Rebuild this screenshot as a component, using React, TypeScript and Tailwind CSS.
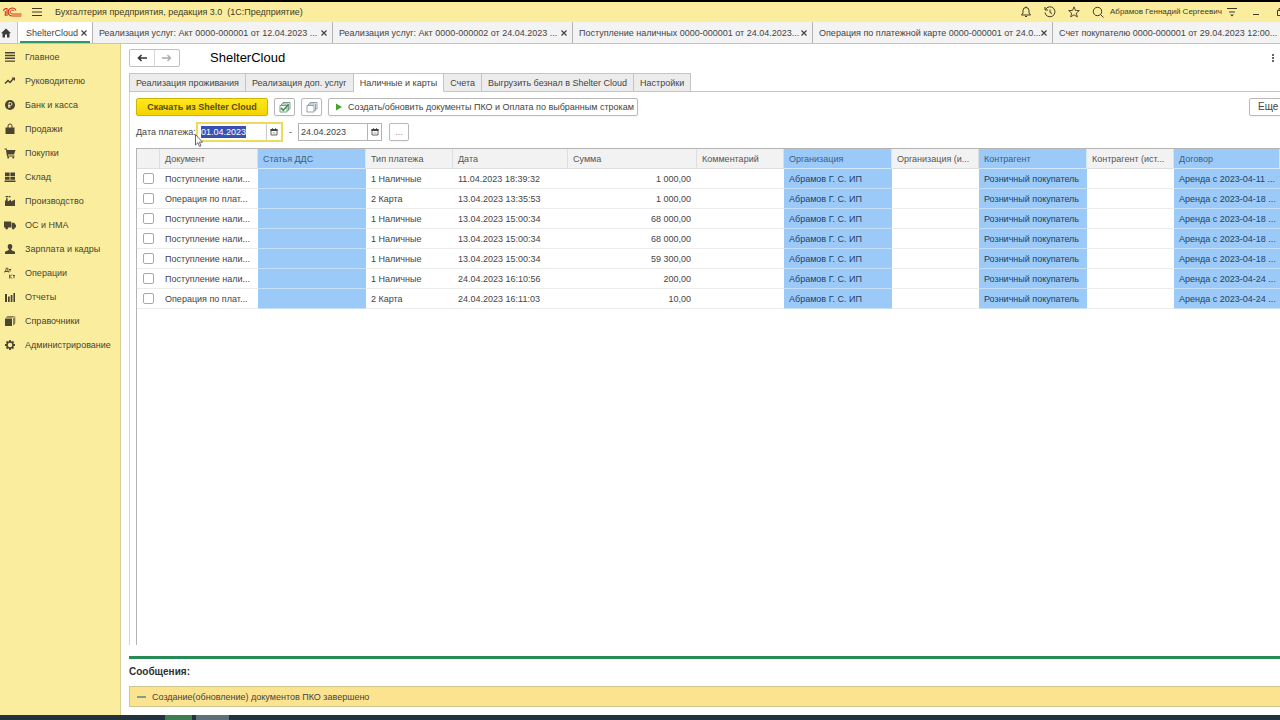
import { useEffect, useRef } from 'react';
import type { ReactNode } from 'react';

const WINDOW_TABS = [
  'Реализация услуг: Акт 0000-000001 от 12.04.2023 ...',
  'Реализация услуг: Акт 0000-000002 от 24.04.2023 ...',
  'Поступление наличных 0000-000001 от 24.04.2023...',
  'Операция по платежной карте 0000-000001 от 24.0...',
  'Счет покупателю 0000-000001 от 29.04.2023 12:00...',
];

const FORM_TABS = [
  'Реализация проживания',
  'Реализация доп. услуг',
  'Наличные и карты',
  'Счета',
  'Выгрузить безнал в Shelter Cloud',
  'Настройки',
];

const ACTIVE_FORM_TAB = 'Наличные и карты';

// Section icons, all on a 12x12 grid
const NAV_ITEMS: { label: string; icon: ReactNode }[] = [
  { label: 'Главное', icon: <path d="M1 1h10v1.4H1zM1 3.8h10v1.4H1zM1 6.6h10V8H1zM1 9.4h10v1.4H1z" /> },
  {
    label: 'Руководителю',
    icon: (
      <>
        <path d="M1 8.5l3-3 2 2 3.5-4" fill="none" stroke="currentColor" strokeWidth="1.5" />
        <path d="M7.5 2.5H11V6z" />
      </>
    ),
  },
  {
    label: 'Банк и касса',
    icon: (
      <>
        <circle cx="6" cy="6" r="5" />
        <path d="M5 9V3.5h1.5a1.5 1.5 0 010 3H4M4 7.9h2.6" fill="none" stroke="#fbed9e" strokeWidth=".9" />
      </>
    ),
  },
  {
    label: 'Продажи',
    icon: (
      <>
        <path d="M1.5 4.5h9V11h-9z" />
        <path d="M4 5.5V3a2 2 0 014 0v2.5" fill="none" stroke="currentColor" />
      </>
    ),
  },
  {
    label: 'Покупки',
    icon: (
      <>
        <path d="M.5 1.5h2l.5 1.500h8.500L10 7.500H4L4 8.500h6.500v1H3L2 3l-.3-.6H.5z" />
        <circle cx="4.2" cy="10.5" r="1" />
        <circle cx="9.2" cy="10.5" r="1" />
      </>
    ),
  },
  { label: 'Склад', icon: <path d="M1 1.5h4.600v3.600H1zM6.400 1.500H11v3.600H6.400zM1 5.800h4.600v3H1zM6.400 5.800H11v3H6.400zM.5 9.600h11V11H.5z" /> },
  { label: 'Производство', icon: <path d="M1 11V5.5h1L2.300 3h1.200l.3 3.500L7 4.500V6.500l4-2V11zM1.500 1h3v1.200h-3zM5 1h1.500v1.200H5z" /> },
  {
    label: 'ОС и НМА',
    icon: (
      <>
        <path d="M0 2.5h7.200v6H0zM7.700 3.700h2.500L12 6.300v2.200H7.700z" />
        <circle cx="2.7" cy="9" r="1.4" />
        <circle cx="9.3" cy="9" r="1.4" />
      </>
    ),
  },
  { label: 'Зарплата и кадры', icon: <path d="M6 1a2.300 2.500 0 012.300 2.600C8.300 5 7.500 6 7.200 6.300v.8L11 8.700V11H1V8.700l3.800-1.600v-.8C4.500 6 3.700 5 3.700 3.600A2.300 2.500 0 016 1z" /> },
  {
    label: 'Операции',
    icon: <path d="M1.500 4.500L2.300 1.200h1.600v3.300M.7 5.500v-1h4v1M5 2.500h2.200M6 2.500v2.200M5.700 7.500v4M8 7.500L6 9.500l2 2M8.800 8.500H11M10 8.500v2.700" fill="none" stroke="currentColor" strokeWidth=".9" />,
  },
  { label: 'Отчеты', icon: <path d="M1 3h2v8H1zM4 5.500h1.700V11H4zM6.700 4h1.700v7H6.700zM9.400 2H11v9H9.400z" /> },
  {
    label: 'Справочники',
    icon: (
      <>
        <path d="M1 3.5h7V11H1z" />
        <path d="M1.500 2.700L3.500 1H11L8.700 2.700zM9 3.500L11.300 1.500v7L9 10.700z" opacity=".65" />
      </>
    ),
  },
  {
    label: 'Администрирование',
    icon: (
      <>
        <circle cx="6" cy="6" r="3" fill="none" stroke="currentColor" strokeWidth="1.5" />
        <path d="M6 1v2M6 9v2M1 6h2M9 6h2M2.500 2.500l1.200 1.200M8.300 8.300l1.200 1.200M2.500 9.500l1.200-1.200M8.300 3.700l1.200-1.200" stroke="currentColor" strokeWidth="1.8" />
      </>
    ),
  },
];

interface Column {
  title: string;
  width: string;
  marked?: boolean;
}

const COLUMNS: Column[] = [
  { title: 'Документ', width: 'w-[98px]' },
  { title: 'Статья ДДС', width: 'w-[108px]', marked: true },
  { title: 'Тип платежа', width: 'w-[87px]' },
  { title: 'Дата', width: 'w-[115px]' },
  { title: 'Сумма', width: 'w-[129px]' },
  { title: 'Комментарий', width: 'w-[87px]' },
  { title: 'Организация', width: 'w-[108px]', marked: true },
  { title: 'Организация (и...', width: 'w-[87px]' },
  { title: 'Контрагент', width: 'w-[108px]', marked: true },
  { title: 'Контрагент (ист...', width: 'w-[87px]' },
  { title: 'Договор', width: 'w-auto', marked: true },
];

const CASH = 'Поступление нали...';
const CARD = 'Операция по плат...';

const PAYMENTS = [
  { doc: CASH, type: '1 Наличные', date: '11.04.2023 18:39:32', sum: '1 000,00', contract: '2023-04-11' },
  { doc: CARD, type: '2 Карта', date: '13.04.2023 13:35:53', sum: '1 000,00', contract: '2023-04-18' },
  { doc: CASH, type: '1 Наличные', date: '13.04.2023 15:00:34', sum: '68 000,00', contract: '2023-04-18' },
  { doc: CASH, type: '1 Наличные', date: '13.04.2023 15:00:34', sum: '68 000,00', contract: '2023-04-18' },
  { doc: CASH, type: '1 Наличные', date: '13.04.2023 15:00:34', sum: '59 300,00', contract: '2023-04-18' },
  { doc: CASH, type: '1 Наличные', date: '24.04.2023 16:10:56', sum: '200,00', contract: '2023-04-24' },
  { doc: CARD, type: '2 Карта', date: '24.04.2023 16:11:03', sum: '10,00', contract: '2023-04-24' },
];

const HeaderButton = ({ label, children }: { label: string; children: ReactNode }) => (
  <button aria-label={label} className="flex h-5 w-6 shrink-0 items-center justify-center">
    <svg viewBox="0 0 12 12" className="h-3 w-3" fill="none" stroke="currentColor">
      {children}
    </svg>
  </button>
);

const CloseIcon = () => (
  <svg viewBox="0 0 6 6" className="h-[6px] w-[6px]" stroke="#444" strokeWidth="1.2">
    <path d="M.5.5l5 5M5.500.5l-5 5" />
  </svg>
);

const CalendarIcon = () => (
  <svg viewBox="0 0 8 8" className="h-2 w-2">
    <path d="M1 1.500h6v5.500H1z" fill="none" stroke="#666" />
    <path d="M.5 1h7v2h-7zM2 .2h1v1H2zM5 .2h1v1H5z" fill="#444" />
    <path d="M2.500 5h3" stroke="#aaa" />
  </svg>
);

const TitleBar = () => (
  <header className="flex h-[22px] shrink-0 items-center border-t-2 border-black bg-[#fbed9e] text-[#3f3a28]">
    <svg viewBox="0 0 20 12" className="ml-[2px] h-3 w-5" fill="none" stroke="#d5301f">
      <path d="M1 4.500L3.500 2.500H5V10M3.300 10V5" strokeWidth="1.100" />
      <path d="M14 4.500A4 4 0 1010.500 10h9" strokeWidth="1.100" />
      <path d="M12 5.200A2 2 0 1010.500 8h9" strokeWidth="1" />
    </svg>
    <button aria-label="Главное меню" className="ml-[9px] flex h-5 w-3 items-center">
      <svg viewBox="0 0 12 10" className="h-[10px] w-3" stroke="currentColor">
        <path d="M1 1.500h10M1 5h10M1 8.500h10" />
      </svg>
    </button>
    <h1 className="ml-3 whitespace-pre">Бухгалтерия предприятия, редакция 3.0  (1С:Предприятие)</h1>
    <div className="-mr-3 ml-auto flex items-center">
      <HeaderButton label="Уведомления">
        <path d="M1.500 9h9L9 7V4.500a3 3 0 00-6 0V7zM5 10.500h2M6 .5v1" />
      </HeaderButton>
      <HeaderButton label="История">
        <path d="M1.500 3.500A5 5 0 111 6.500M1 1v3h3M6 3.500v3l2 1" />
      </HeaderButton>
      <HeaderButton label="Избранное">
        <path d="M6 .8l1.400 3.600 3.900.2-3 2.500 1 3.800L6 8.800l-3.300 2.100 1-3.800-3-2.500 3.900-.2z" strokeWidth=".9" />
      </HeaderButton>
      <HeaderButton label="Поиск">
        <circle cx="5.500" cy="5.500" r="4.200" />
        <path d="M8.500 8.500l3 3" />
      </HeaderButton>
      <span className="w-[110px] whitespace-nowrap text-[8px]">Абрамов Геннадий Сергеевич</span>
      <HeaderButton label="Сервис">
        <path d="M1 2.500h10M3 6h6" />
        <path d="M4 8.500h4L6 10.500z" fill="currentColor" stroke="none" />
      </HeaderButton>
      <HeaderButton label="Свернуть">
        <path d="M3 8.500h6" />
      </HeaderButton>
      <HeaderButton label="Развернуть">
        <path d="M3.500 4.500h5v5h-5zM5 4.500v-2h5v5H8.500" />
      </HeaderButton>
    </div>
  </header>
);

const WindowTabs = () => (
  <nav className="flex h-[22px] shrink-0 overflow-hidden border-b border-[#c4c4c4] bg-[#f3f3f3]">
    <button aria-label="Начальная страница" className="flex w-[18px] shrink-0 items-center justify-center border-r border-[#c4c4c4] pr-[6px]">
      <svg viewBox="0 0 10 10" className="h-[10px] w-[10px]" fill="#3c3c3c">
        <path d="M5 .5L0 5.200h1.500v4.300H4V6.500h2v3h2.500V5.200H10z" />
      </svg>
    </button>
    <div className="flex w-[74px] shrink-0 bg-white px-[2px]">
      <div className="flex flex-1 items-center justify-between border-b-2 border-[#2f9561] pt-[2px] pr-[3px] pl-[6px]">
        <button>ShelterCloud</button>
        <button aria-label="Закрыть">
          <CloseIcon />
        </button>
      </div>
    </div>
    {WINDOW_TABS.map((title) => (
      <div key={title} className="flex w-[240px] shrink-0 items-center justify-between border-l border-[#b4b4b4] pr-[5px] pl-[6px]">
        <button className="whitespace-nowrap">{title}</button>
        <button aria-label="Закрыть">
          <CloseIcon />
        </button>
      </div>
    ))}
  </nav>
);

const Sidebar = () => (
  <aside className="w-[121px] shrink-0 border-r border-[#d8cf95] bg-[#fbed9e] pt-px text-[#4a4430]">
    {NAV_ITEMS.map((item) => (
      <a key={item.label} href="#" className="flex h-6 items-center gap-[9px] pl-1">
        <svg viewBox="0 0 12 12" className="h-3 w-3 shrink-0" fill="currentColor">
          {item.icon}
        </svg>
        {item.label}
      </a>
    ))}
  </aside>
);

const Toolbar = () => (
  <div className="flex h-[18px] items-center gap-[6px]">
    <button className="h-[18px] w-[132px] rounded-xs border border-[#d0b400] bg-linear-to-b from-[#ffe81a] to-[#f3d300] font-bold whitespace-nowrap text-[#574c10] shadow-xs">
      Скачать из Shelter Cloud
    </button>
    <button aria-label="Установить флажки" className="flex h-[18px] w-[21px] items-center justify-center rounded-xs border border-[#b9b9b9] shadow-xs">
      <svg viewBox="0 0 12 12" className="h-3 w-3" fill="none">
        <path d="M4 3V1.500h7V8H9M2.500 4.500V3h7v6.500H8" stroke="#7d9a8c" />
        <path d="M1 4.500h7V11H1z" fill="#fff" stroke="#7d9a8c" />
        <path d="M2 7l2.300 2.300L9.500 3.500" stroke="#3f9c4a" strokeWidth="1.8" />
      </svg>
    </button>
    <button aria-label="Снять флажки" className="flex h-[18px] w-[21px] items-center justify-center rounded-xs border border-[#b9b9b9] shadow-xs">
      <svg viewBox="0 0 12 12" className="h-3 w-3" fill="none" stroke="#8fa3ae">
        <path d="M4 3V1.500h7V8H9.500M2.500 4.500V3h7v6.500H8" />
        <path d="M1 4.500h7V11H1z" fill="#fff" />
      </svg>
    </button>
    <button className="flex h-[18px] w-[310px] items-center rounded-xs border border-[#b9b9b9] pl-[7px] whitespace-nowrap shadow-xs">
      <svg viewBox="0 0 6 8" className="mr-[6px] h-2 w-[6px]" fill="#41a62a">
        <path d="M0 .5L6 4 0 7.500z" />
      </svg>
      Создать/обновить документы ПКО и Оплата по выбранным строкам
    </button>
    <button className="-mr-4 ml-auto flex h-[18px] w-[47px] items-center gap-1 rounded-xs border border-[#b9b9b9] pl-2 text-[10px] shadow-xs">
      Еще
      <svg viewBox="0 0 6 4" className="h-1 w-[6px]" fill="#666">
        <path d="M0 0h6L3 4z" />
      </svg>
    </button>
  </div>
);

const PeriodFilter = () => {
  const fromRef = useRef<HTMLInputElement>(null);

  useEffect(() => {
    fromRef.current?.focus();
    fromRef.current?.select();
  }, []);

  return (
    <div className="mt-[6px] flex h-5 items-center">
      <label htmlFor="date-from" className="w-[60px] whitespace-nowrap">Дата платежа:</label>
      <div className="relative flex h-5 w-[87px] items-center border-2 border-[#eedb5c] bg-white">
        <input
          ref={fromRef}
          id="date-from"
          defaultValue="01.04.2023"
          className="w-[68px] pl-[3px] outline-none selection:bg-[#3b50b4] selection:text-white"
        />
        <button aria-label="Выбрать дату начала" className="flex h-4 flex-1 items-center justify-center border-l border-[#c9c9c9]">
          <CalendarIcon />
        </button>
        {/* mouse pointer */}
        <svg viewBox="0 0 8 13" className="absolute top-[10px] -left-[3px] h-[13px] w-2">
          <path d="M.5.5v10.500l2.400-2.300 1.600 3.700 1.500-.6-1.600-3.600h3.100z" fill="#fff" stroke="#444" strokeWidth=".8" />
        </svg>
      </div>
      <span className="w-[15px] text-center">-</span>
      <div className="flex h-[18px] w-[84px] items-center border border-[#b4b4b4] bg-white">
        <input aria-label="Дата окончания" defaultValue="24.04.2023" className="w-[68px] pl-[2px] outline-none" />
        <button aria-label="Выбрать дату окончания" className="flex h-4 flex-1 items-center justify-center border-l border-[#b4b4b4]">
          <CalendarIcon />
        </button>
      </div>
      <button aria-label="Выбрать период" className="ml-[7px] h-[18px] w-5 rounded-xs border border-[#b9b9b9] text-[#888] shadow-xs">
        ...
      </button>
    </div>
  );
};

const PaymentsTable = () => (
  <div className="mt-[6px] min-h-0 flex-1 border-t border-l border-[#b4b4b4]">
    <table className="w-full table-fixed border-separate border-spacing-0">
      <thead>
        <tr className="h-5">
          <th className="w-[23px] border-r border-b border-[#dedede] bg-[#f2f2f2]" />
          {COLUMNS.map((col) => (
            <th
              key={col.title}
              className={`${col.width} border-r border-b p-0 pl-[5px] text-left font-normal whitespace-nowrap ${
                col.marked ? 'border-[#d4e8fb] bg-[#9bcaf9] text-[#3c5e80]' : 'border-[#dedede] bg-[#f2f2f2] text-[#555]'
              }`}
            >
              {col.title}
            </th>
          ))}
        </tr>
      </thead>
      <tbody>
        {PAYMENTS.map((row, i) => {
          const cells = [
            row.doc, '', row.type, row.date, row.sum, '',
            'Абрамов Г. С. ИП', '', 'Розничный покупатель', '', `Аренда с ${row.contract} ...`,
          ];

          return (
            <tr key={i} className="h-5">
              <td className="border-b border-[#ececec] p-0">
                <input
                  type="checkbox"
                  aria-label={`Выбрать строку ${i + 1}`}
                  className="mx-auto block h-[11px] w-[11px] appearance-none rounded-xs border border-[#a8a8a8] bg-white checked:bg-[#41a62a]"
                />
              </td>
              {cells.map((cell, j) => (
                <td
                  key={j}
                  className={`border-b p-0 whitespace-nowrap ${j === 4 ? 'pr-[6px] text-right' : 'pl-[5px]'} ${
                    COLUMNS[j].marked ? 'border-[#c6e0fa] bg-[#9bcaf9] text-[#23425f]' : 'border-[#ececec]'
                  }`}
                >
                  {cell}
                </td>
              ))}
            </tr>
          );
        })}
      </tbody>
    </table>
  </div>
);

const Messages = () => (
  <section className="mt-[11px] mb-2 ml-2 border-t-[3px] border-[#278b55]">
    <h3 className="mt-[5px] h-4 text-[10px] leading-4 font-bold text-[#2f2f2f]">Сообщения:</h3>
    <div className="mt-[6px] flex h-[21px] items-center border border-r-0 border-[#cfc590] bg-[#fbe38f] pl-[7px]">
      <span className="mr-[6px] h-[2px] w-[9px] bg-[#7aa08f]" />
      Создание(обновление) документов ПКО завершено
    </div>
  </section>
);

export default function App() {
  return (
    <div className="flex h-screen flex-col overflow-hidden bg-white font-['Liberation_Sans',Arial,sans-serif] text-[9px] leading-3 text-[#444]">
      <TitleBar />
      <WindowTabs />
      <div className="flex min-h-0 flex-1">
        <Sidebar />
        <main className="flex min-w-0 flex-1 flex-col overflow-hidden">
          <div className="mt-[5px] ml-2 flex h-[18px] shrink-0 items-center">
            <div className="flex h-[18px] w-[51px] rounded-xs border border-[#c0c0c0]">
              <button aria-label="Назад" className="flex flex-1 items-center justify-center">
                <svg viewBox="0 0 10 8" className="h-2 w-[10px]" fill="none" stroke="#333" strokeWidth="1.6">
                  <path d="M10 4H1.500M4.500 1l-3 3 3 3" />
                </svg>
              </button>
              <button aria-label="Вперед" className="flex flex-1 items-center justify-center border-l border-[#d8d8d8]">
                <svg viewBox="0 0 10 8" className="h-2 w-[10px]" fill="none" stroke="#aaa" strokeWidth="1.3">
                  <path d="M0 4h8.500M5.500 1l3 3-3 3" />
                </svg>
              </button>
            </div>
            <h2 className="ml-[30px] text-[13px] leading-4 text-black">ShelterCloud</h2>
            <button aria-label="Дополнительно" className="mr-[5px] ml-auto">
              <svg viewBox="0 0 4 8" className="h-2 w-1" fill="#666">
                <path d="M1 0h2v2H1zM1 3h2v2H1zM1 6h2v2H1z" />
              </svg>
            </button>
          </div>

          <div className="mt-[6px] ml-2 flex h-[19px] shrink-0 border-b border-[#c4c4c4]">
            {FORM_TABS.map((tab) => (
              <button
                key={tab}
                className={`-mb-px border border-l-0 border-[#c4c4c4] px-[6px] whitespace-nowrap first:border-l ${
                  tab === ACTIVE_FORM_TAB ? 'border-b-white bg-white' : 'bg-[#ececec]'
                }`}
              >
                {tab}
              </button>
            ))}
          </div>

          <div className="ml-2 flex min-h-0 flex-1 flex-col border-l border-[#d4d4d4] pt-[6px] pl-[6px]">
            <Toolbar />
            <PeriodFilter />
            <PaymentsTable />
          </div>
          <Messages />
        </main>
      </div>
      <footer className="flex h-[5px] shrink-0 bg-[#22333f] pl-[165px]">
        <span className="w-[27px] bg-[#3c7d52]" />
        <span className="ml-1 w-[33px] bg-[#5f6f78]" />
      </footer>
    </div>
  );
}
